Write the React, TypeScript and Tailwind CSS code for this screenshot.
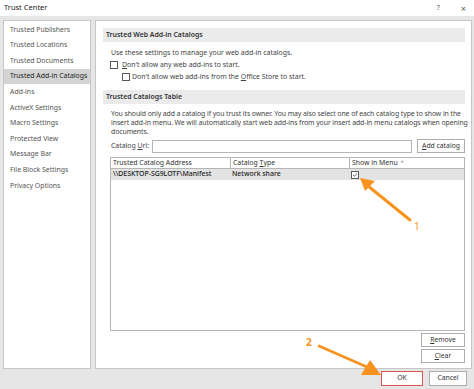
import React from "react";

const navItems = [
  "Trusted Publishers",
  "Trusted Locations",
  "Trusted Documents",
  "Trusted Add-in Catalogs",
  "Add-ins",
  "ActiveX Settings",
  "Macro Settings",
  "Protected View",
  "Message Bar",
  "File Block Settings",
  "Privacy Options",
];

function Check({ checked = false }: { checked?: boolean }) {
  return (
    <span className="inline-flex h-[8px] w-[8px] shrink-0 items-center justify-center border border-[#5a5a5a] bg-white">
      {checked && (
        <svg width="6" height="6" viewBox="0 0 6 6">
          <path d="M1 3 L2.4 4.4 L5 1.4" fill="none" stroke="#555" strokeWidth="0.9" />
        </svg>
      )}
    </span>
  );
}

function Btn({ children, className = "" }: { children: React.ReactNode; className?: string }) {
  return (
    <div
      className={
        "flex h-[14px] items-center justify-center whitespace-nowrap border border-[#adadad] bg-white text-[6.8px] text-[#333] " +
        className
      }
    >
      {children}
    </div>
  );
}

export default function App() {
  return (
    <div
      className="relative h-[389px] w-[474px] overflow-hidden bg-[#e6e6e6] text-[6.9px] text-[#444]"
      style={{ fontFamily: '"Noto Sans", "Open Sans", sans-serif' }}
    >
      {/* title bar */}
      <div className="flex h-[16px] items-center bg-white pl-[4px] pr-[8px] text-[#222]">
        <span className="text-[7.5px]">Trust Center</span>
        <span className="ml-auto text-[7px] text-[#555]">?</span>
        <span className="ml-[21px] text-[9px] leading-none text-[#555]">×</span>
      </div>

      <div className="flex h-[353px] gap-[4px] pl-[3px] pr-[2px] pt-[4px]">
        {/* left nav */}
        <div className="w-[88px] shrink-0 border border-[#c6c6c6] bg-white pt-[1px]">
          {navItems.map((item) => (
            <div
              key={item}
              className={
                "flex h-[15.6px] items-center whitespace-nowrap pl-[6px] " +
                (item === "Trusted Add-in Catalogs" ? "bg-[#d4d4d4] text-[#222]" : "text-[#555]")
              }
            >
              {item}
            </div>
          ))}
        </div>

        {/* right panel */}
        <div className="flex min-w-0 flex-1 flex-col border border-[#c6c6c6] bg-white pl-[7px] pr-[6px] pt-[7px]">
          <div className="flex h-[14px] items-center bg-[#ebebeb] pl-[3px] font-semibold text-[#333]">
            Trusted Web Add-in Catalogs
          </div>
          <div className="mt-[6px] pl-[8px] leading-[9px]">Use these settings to manage your web add-in catalogs.</div>
          <div className="mt-[3px] flex items-center gap-[4px] pl-[7px] leading-[9px]">
            <Check />
            <span>
              <u>D</u>on't allow any web add-ins to start.
            </span>
          </div>
          <div className="mt-[3px] flex items-center gap-[2px] pl-[19px] leading-[9px]">
            <Check />
            <span>
              Don't allow web add-ins from the <u>O</u>ffice Store to start.
            </span>
          </div>

          <div className="mt-[9px] flex h-[14px] items-center bg-[#ebebeb] pl-[3px] font-semibold text-[#333]">
            Trusted Catalogs Table
          </div>
          <div className="mt-[5px] whitespace-nowrap pl-[8px] leading-[9px] tracking-[-0.08px]">
            You should only add a catalog if you trust its owner. You may also select one of each catalog type to show in the
            <br />
            insert add-in menu. We will automatically start web add-ins from your insert add-in menu catalogs when opening
            <br />
            documents.
          </div>

          <div className="mt-[3px] flex items-center pl-[8px]">
            <span className="w-[41px] whitespace-nowrap">
              Catalog <u>U</u>rl:
            </span>
            <div className="h-[13px] flex-1 border border-[#b5b5b5]" />
            <Btn className="ml-[5px] w-[48px]">
              <span>
                <u>A</u>dd catalog
              </span>
            </Btn>
          </div>

          {/* table */}
          <div className="ml-[7px] mt-[4px] h-[174px] border border-[#b5b5b5]">
            <div className="grid h-[11px] grid-cols-[120px_119px_1fr] text-[#333]">
              <div className="flex items-center whitespace-nowrap border-b border-r border-[#b5b5b5] pl-[2px]">
                Trusted Catalog Address
              </div>
              <div className="flex items-center whitespace-nowrap border-b border-r border-[#b5b5b5] pl-[2px]">
                Catalog&nbsp;<u>T</u>ype
              </div>
              <div className="flex items-center whitespace-nowrap border-b border-[#b5b5b5] pl-[2px]">
                Show in Menu <span className="ml-[3px] text-[5px]">^</span>
              </div>
            </div>
            <div className="grid h-[11px] grid-cols-[120px_119px_1fr] bg-[#e3e3e3] font-medium text-[#222]">
              <div className="flex items-center whitespace-nowrap pl-[2px]">\\DESKTOP-SG9LOTF\Manifest</div>
              <div className="flex items-center whitespace-nowrap pl-[1px]">Network share</div>
              <div className="flex items-center pl-[1px]">
                <Check checked />
              </div>
            </div>
          </div>

          <div className="mt-[2px] flex flex-col items-end gap-[2px]">
            <Btn className="w-[44px]">
              <span>
                <u>R</u>emove
              </span>
            </Btn>
            <Btn className="w-[44px]">
              <span>
                <u>C</u>lear
              </span>
            </Btn>
          </div>
        </div>
      </div>

      {/* bottom buttons */}
      <div className="flex justify-end gap-[6px] pr-[7px] pt-[2px]">
        <Btn className="h-[15px] w-[42px] border-[#d9534f]">OK</Btn>
        <Btn className="h-[15px] w-[38px]">Cancel</Btn>
      </div>

      {/* annotations */}
      <svg className="pointer-events-none absolute left-0 top-0" width="474" height="389">
        <line x1="410" y1="220" x2="368" y2="186" stroke="#f7931e" strokeWidth="3" strokeLinecap="round" />
        <polygon points="360,178 375,181 365,191" fill="#f7931e" />
        <line x1="319" y1="346" x2="367" y2="367" stroke="#f7931e" strokeWidth="2.5" strokeLinecap="round" />
        <polygon points="381,375 361,375 370,360" fill="#f7931e" />
      </svg>
      <span className="absolute left-[414px] top-[219px] text-[10px] text-[#f7931e]">1</span>
      <span className="absolute left-[306px] top-[335px] text-[10px] font-bold text-[#f7931e]">2</span>
    </div>
  );
}
